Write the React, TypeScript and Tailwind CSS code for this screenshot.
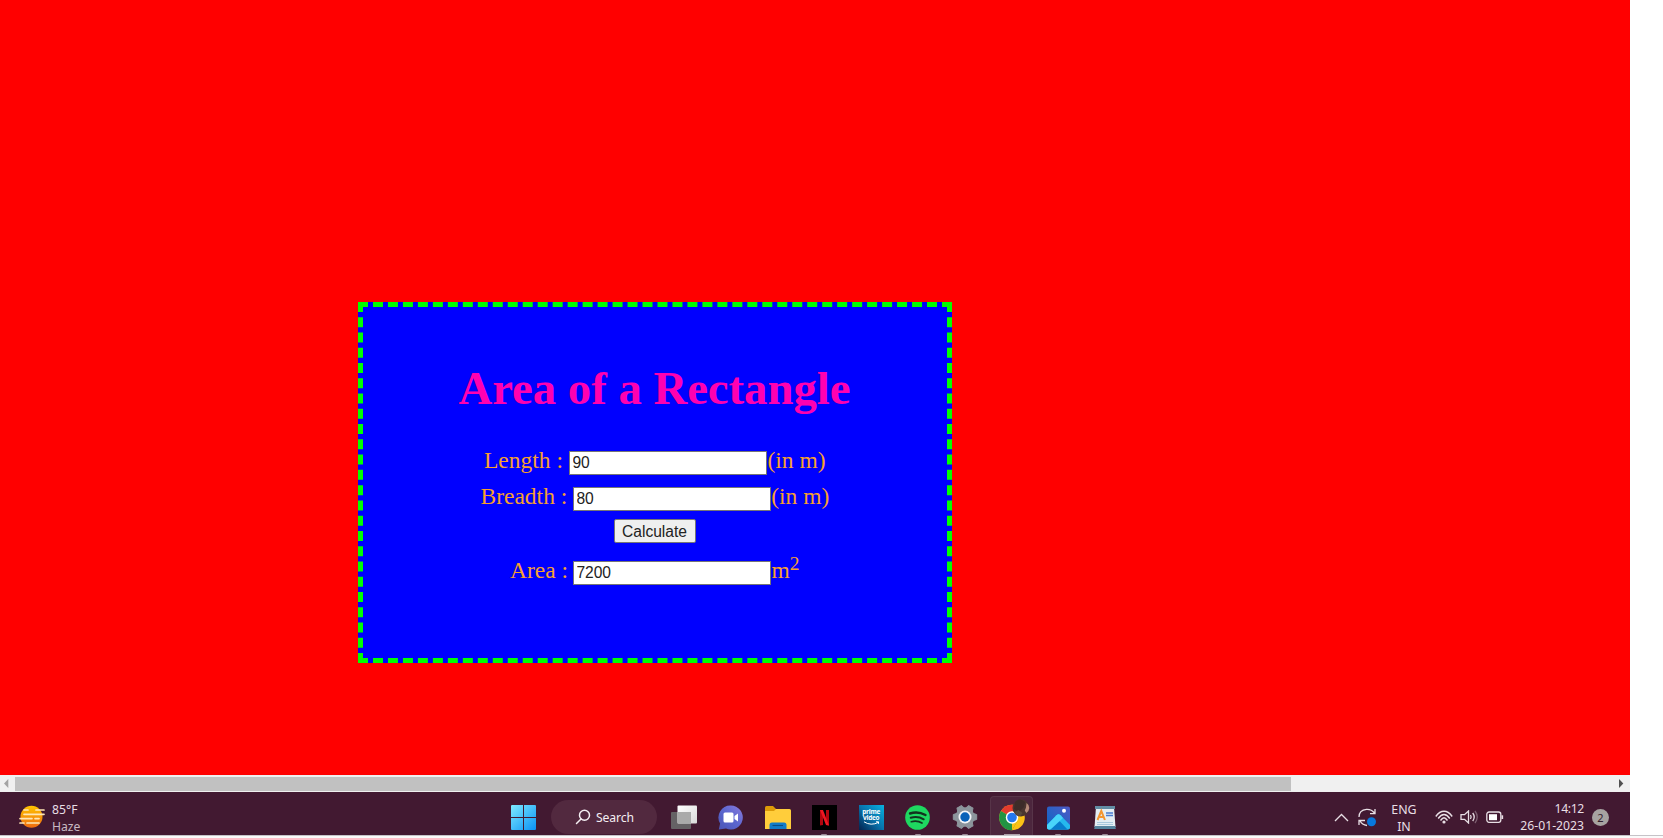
import React from "react";

const serif = "font-['Liberation_Serif',serif]";
const field =
  "h-[23.5px] border border-[#767676] bg-white pl-[3px] font-['Liberation_Sans',sans-serif] text-[15.6px] leading-[21px] tracking-[-0.1px] text-[#222] outline-none rounded-none";

function Slot({ children, dot }: { children: React.ReactNode; dot?: boolean }) {
  return (
    <div className="flex h-[43px] w-[46.8px] flex-col items-center">
      <div className="flex h-[42px] w-full items-end justify-center pb-[4px]">{children}</div>
      <div className={dot ? "h-px w-[6px] rounded-t bg-[#9b8794]" : "h-px"} />
    </div>
  );
}

function Weather() {
  return (
    <svg width="28" height="24" viewBox="0 0 28 24">
      <defs>
        <linearGradient id="sun" x1="0" y1="0" x2="0" y2="1">
          <stop offset="0" stopColor="#ffc400" />
          <stop offset="1" stopColor="#ef6a10" />
        </linearGradient>
      </defs>
      <circle cx="13.5" cy="11.8" r="11" fill="url(#sun)" />
      <g stroke="#ffe6b5" strokeWidth="1.7" strokeLinecap="round">
        <path d="M18 5h8M6 5h4M6 9.3h20M2 13.6h12M17 13.6h4M2 18h4M9 18h12" />
      </g>
    </svg>
  );
}

function Windows() {
  return (
    <svg width="25" height="25" viewBox="0 0 25 25">
      <defs>
        <linearGradient id="win" x1="0" y1="0" x2="1" y2="1">
          <stop offset="0" stopColor="#7eeaff" />
          <stop offset="1" stopColor="#0a91f5" />
        </linearGradient>
      </defs>
      <path fill="url(#win)" d="M1 0h11v12H0V1a1 1 0 0 1 1-1zM13 0h11a1 1 0 0 1 1 1v11H13zM0 13h12v12H1a1 1 0 0 1-1-1zM13 13h12v11a1 1 0 0 1-1 1H13z" />
    </svg>
  );
}

function TaskView() {
  return (
    <svg width="26" height="25" viewBox="0 0 26 25">
      <defs>
        <linearGradient id="tv" x1="0" y1="0" x2="1" y2="1">
          <stop offset="0" stopColor="#fff" />
          <stop offset="1" stopColor="#d9d9d9" />
        </linearGradient>
      </defs>
      <rect x="0" y="7" width="20" height="17" rx="1" fill="#656265" />
      <rect x="6.5" y="0.5" width="19.5" height="18" rx="1" fill="url(#tv)" />
      <path d="M6.500 7H20v11.500H6.500z" fill="#aaa" />
    </svg>
  );
}

function Chat() {
  return (
    <svg width="25" height="25" viewBox="0 0 25 25">
      <defs>
        <linearGradient id="chat" x1="1" y1="0" x2="0" y2="1">
          <stop offset="0" stopColor="#8b7bdd" />
          <stop offset="0.5" stopColor="#5b66cf" />
          <stop offset="1" stopColor="#4a55b5" />
        </linearGradient>
      </defs>
      <path d="M13 .5a12 12 0 1 1-5 23L.8 24.500l1.300-6A12 12 0 0 1 13 .5z" fill="url(#chat)" />
      <rect x="5.500" y="7.500" width="10" height="10" rx="1.500" fill="#fff" />
      <path d="M16.500 11l3.500-2.500v8L16.500 14z" fill="#fff" />
    </svg>
  );
}

function Folder() {
  return (
    <svg width="26" height="24" viewBox="0 0 26 24">
      <path d="M0 1.500Q0 0 1.500 0H8l3 3v6H0z" fill="#dc9a08" />
      <path d="M0 5h9l2-2h13.500Q26 3 26 4.500V23H0z" fill="#ffcd3b" />
      <path d="M4.500 23v-4q0-2.500 2.500-2.500h12q2.500 0 2.500 2.500v4z" fill="#117bc9" />
      <path d="M7.500 19.500h10.500" stroke="#0a4c86" strokeWidth="1.100" />
    </svg>
  );
}

function Netflix() {
  return (
    <svg width="25" height="25" viewBox="0 0 25 25">
      <path d="M0 0h25v25H0z" fill="#000" />
      <path d="M8 5h3v15l-3 .5zM14 5h3v15.500l-3-.5z" fill="#b1060f" />
      <path d="M8 5h3l6 15.500-3-.5z" fill="#f01722" />
    </svg>
  );
}

function Prime() {
  return (
    <div className="flex h-[25px] w-[25px] flex-col items-center bg-linear-to-tr from-[#04234f] via-[#0874ad] to-[#09b3e0] pt-[4px] font-['Open_Sans',sans-serif] text-[6.4px] leading-[6px] font-bold tracking-[-0.2px] text-white">
      <span>prime</span>
      <span>video</span>
      <svg width="17" height="5" viewBox="0 0 17 5">
        <path d="M1 .8q7 4.500 14.500.5M13 .8h2.500v2" fill="none" stroke="#fff" strokeWidth="1" />
      </svg>
    </div>
  );
}

function Spotify() {
  return (
    <svg width="25" height="25" viewBox="0 0 25 25">
      <circle cx="12.500" cy="12.500" r="12.300" fill="#1ed760" />
      <g fill="none" stroke="#12321f" strokeLinecap="round">
        <path d="M5 8.500q8-2.500 15.500 1.500" strokeWidth="2.400" />
        <path d="M5.700 12.800q7-2 13 1.500" strokeWidth="2" />
        <path d="M6.300 16.700q6-1.500 10.700 1.300" strokeWidth="1.700" />
      </g>
    </svg>
  );
}

function Gear() {
  return (
    <svg width="26" height="26" viewBox="0 0 26 26">
      <g fill="#8c959c" stroke="#8c959c" strokeLinejoin="round">
        <circle cx="13" cy="13" r="9.200" />
        {[0, 60, 120, 180, 240, 300].map((a) => (
          <path key={a} d="M10.500 1.300h5l1.500 4.700h-8z" transform={`rotate(${a + 30} 13 13)`} />
        ))}
      </g>
      <circle cx="13" cy="13" r="6.500" fill="#f2f5f8" />
      <circle cx="13" cy="13" r="4.700" fill="#0862b9" />
    </svg>
  );
}

function Chrome() {
  return (
    <svg width="33" height="32" viewBox="0 0 33 32">
      <circle cx="13" cy="18.500" r="12.800" fill="#fbc116" />
      <path d="M13 18.500L1.900 12.100A12.800 12.800 0 0 1 24.100 12.100z" fill="#e33b2e" />
      <path d="M13 18.500L1.900 12.100A12.800 12.800 0 0 0 13 31.300l5.500-9.600z" fill="#229342" />
      <path d="M13 12.500h11.300l.8 2L18.500 22 13 31.300z" fill="#fbc116" />
      <circle cx="13" cy="18.500" r="6.200" fill="#fff" />
      <circle cx="13" cy="18.500" r="4.800" fill="#2478ee" />
      <circle cx="22" cy="9" r="8.500" fill="#49352f" />
      <path d="M27.500 4q3 2 2.800 5t-3 5l-1.500-2.500 1.200-3z" fill="#b58a79" />
      <path d="M16 3q5-5 10 0l-1 5-5 5-5-3z" fill="#3c2c29" />
      <path d="M15.500 13l4-2 4 3-2 3q-4 0-6-4z" fill="#574a3c" />
    </svg>
  );
}

function Photos() {
  return (
    <svg width="23" height="24" viewBox="0 0 23 24">
      <defs>
        <linearGradient id="ph" x1="0" y1="1" x2="1" y2="0">
          <stop offset="0" stopColor="#0868c5" />
          <stop offset="1" stopColor="#5059c5" />
        </linearGradient>
        <clipPath id="phc"><rect width="23" height="23" y=".5" rx="2" /></clipPath>
      </defs>
      <g clipPath="url(#phc)">
        <path d="M0 0h23v24H0z" fill="url(#ph)" />
        <path d="M-1 20L9.500 9.300q2-2 4 0L24 20v5H-1z" fill="#25b8ed" />
        <path d="M2 24l7.500-8q2-2 4 0l7.500 8z" fill="#087ccc" />
        <path d="M9.500 9.300q2-2 4 0l2.500 2.700L3 24h-4v-4z" fill="#48d5fa" />
      </g>
      <circle cx="17" cy="4.700" r="2" fill="#fff" />
    </svg>
  );
}

function WordPad() {
  return (
    <svg width="22" height="25" viewBox="0 0 22 25">
      <path d="M2 2h18l1.500 20H.5z" fill="#e4edf3" />
      <path d="M1 1h20v3H1z" fill="#638da4" />
      <path d="M.7 21h20.600l.5 3H.2z" fill="#56849f" />
      <path d="M3.500 15L7.300 6l3.600 9M5 12h5" fill="none" stroke="#f39531" strokeWidth="2" />
      <path d="M12 8h7M12 10.500h7" stroke="#477bd1" strokeWidth="1.500" />
      <path d="M3 17.500h16M3 19.500h16" stroke="#a8c8dd" strokeWidth="1" />
    </svg>
  );
}

function Tray() {
  return (
    <>
      <svg className="mt-[21px] shrink-0" width="15" height="9" viewBox="0 0 15 9">
        <path d="M1 8l6.500-6.500L14 8" fill="none" stroke="#e8dfe5" strokeWidth="1.300" />
      </svg>
      <svg className="mt-[16px] ml-[9px] shrink-0" width="19" height="20" viewBox="0 0 19 20">
        <g fill="none" stroke="#e8dfe5" strokeWidth="1.300">
          <path d="M1 9Q1 2 8.500 1.300q5-.3 8 3.700M17 1v4.600h-5" />
          <path d="M1 17v-4.500h6M2 12.800q2 4 7 4.700" />
        </g>
        <circle cx="13.500" cy="13.700" r="4.500" fill="#0878dd" />
      </svg>
      <div className="ml-[11px] flex w-[32px] flex-col pt-[9px] text-center text-[12.4px] leading-[17px]">
        <span>ENG</span>
        <span>IN</span>
      </div>
      <svg className="mt-[18px] ml-[15px] shrink-0" width="18" height="15" viewBox="0 0 18 15">
        <g fill="none" stroke="#e8dfe5" strokeWidth="1.400">
          <path d="M.8 6.500Q4.500 1.300 9 1.300T17.200 6.500" />
          <path d="M3.200 8.500Q6 4.500 9 4.500t5.800 4" />
          <path d="M5.500 10.500Q7.500 7.700 9 7.700t3.500 2.800" />
        </g>
        <circle cx="9" cy="12" r="1.600" fill="#e8dfe5" />
      </svg>
      <svg className="mt-[18px] ml-[7px] shrink-0" width="19" height="14" viewBox="0 0 19 14">
        <g fill="none" stroke="#e8dfe5" strokeWidth="1.300">
          <path d="M1 4.700h3.500L8.500 1v12L4.500 9.300H1z" />
          <path d="M10.500 5q1.300 2 0 4M12.700 3q3 4 0 8" />
          <path d="M15 1q4.500 6 0 12" opacity=".35" />
        </g>
      </svg>
      <svg className="mt-[19px] ml-[7px] shrink-0" width="18" height="13" viewBox="0 0 18 13">
        <rect x=".8" y="1" width="14" height="10.300" rx="2.200" fill="none" stroke="#e8dfe5" strokeWidth="1.300" />
        <rect x="3" y="3.200" width="8" height="6" fill="#fff" />
        <path d="M16.300 4.300v3.700" stroke="#e8dfe5" strokeWidth="1.700" />
      </svg>
      <div className="ml-[9px] flex w-[71px] flex-col pt-[8px] text-right text-[12.2px] leading-[17px]">
        <span className="tracking-[-0.35px]">14:12</span>
        <span className="whitespace-nowrap">26-01-2023</span>
      </div>
      <div className="mt-[17px] ml-[8px] flex h-[17px] w-[17px] shrink-0 items-center justify-center rounded-full bg-[#a7a3a1] text-[11px] leading-none text-[#32202c]">
        2
      </div>
    </>
  );
}

export default function App() {
  return (
    <div className="flex h-[838px] w-[1663px] flex-col overflow-hidden bg-white">
      <div className="flex h-[835px] w-[1630px] flex-col">
        <main className="h-[775px] bg-[#ff0000] pt-[302px] pl-[357.5px]">
          <section className={`h-[360.6px] w-[594.5px] border-[5.3px] border-dashed border-[#00ff00] bg-[#0000ff] text-[#f7a02e] ${serif} text-[23.5px] leading-[28px]`}>
            <h1 className="pt-[55px] pl-[96px] text-[46.7px] leading-[53px] font-bold whitespace-nowrap text-[#ff00b0]">
              Area of a Rectangle
            </h1>
            <div className="mt-[31px] flex h-[36px] items-start whitespace-nowrap">
              <label className="w-[206px] pl-[121.500px] whitespace-pre">Length :</label>
              <input className={`${field} mt-[5px] w-[198.500px]`} defaultValue="90" />
              <span className="pl-[0.5px]">(in m)</span>
            </div>
            <div className="flex h-[37px] items-start whitespace-nowrap">
              <label className="w-[210px] pl-[118px] whitespace-pre">Breadth :</label>
              <input className={`${field} mt-[5px] w-[198px]`} defaultValue="80" />
              <span className="pl-[0.7px]">(in m)</span>
            </div>
            <div className="flex h-[37px] pl-[251px]">
              <button className="h-[24px] w-[82px] rounded-[2px] border border-[#767676] bg-[#efefef] font-['Liberation_Sans',sans-serif] text-[15.6px] leading-[21px] text-[#222]">
                Calculate
              </button>
            </div>
            <div className="flex h-[30px] items-start whitespace-nowrap">
              <label className="w-[210px] pl-[147.500px] whitespace-pre">Area :</label>
              <input className={`${field} mt-[5px] w-[198.500px]`} defaultValue="7200" />
              <span className="pl-[0.5px]">m</span>
              <span className="-mt-[6px] text-[19.5px]">2</span>
            </div>
          </section>
        </main>

        <div className="flex h-[17px] items-center bg-[#f0f0f0]">
          <svg className="ml-[4px]" width="11" height="9" viewBox="0 0 11 9">
            <path d="M4.300 0v9L0 4.500z" fill="#a3a3a3" />
          </svg>
          <div className="h-[14px] w-[1276px] bg-[#c1c1c1]" />
          <svg className="ml-[328px]" width="5" height="9" viewBox="0 0 5 9">
            <path d="M0 0v9l4.300-4.500z" fill="#505050" />
          </svg>
        </div>

        <footer className="flex h-[43px] items-start bg-[#421931] font-['Noto_Sans',sans-serif] text-[#e8dfe5]">
          <div className="flex w-[511px] items-start pl-[18px]">
            <div className="pt-[12.500px]"><Weather /></div>
            <div className="flex flex-col pt-[9px] pl-[6px] text-[12.200px] leading-[17px] whitespace-nowrap">
              <span>85°F</span>
              <span className="text-[#c9b9c3]">Haze</span>
            </div>
          </div>
          <div className="pt-[13px]"><Windows /></div>
          <div className="mt-[8px] ml-[15px] flex h-[34px] w-[106px] items-center rounded-full bg-[#52293f] pl-[24px] text-[12.200px]">
            <svg width="16" height="16" viewBox="0 0 16 16">
              <circle cx="9.500" cy="6.300" r="5" fill="none" stroke="#f4eef2" strokeWidth="1.500" />
              <path d="M6 10l-4.500 4.500" stroke="#f4eef2" strokeWidth="1.500" strokeLinecap="round" />
            </svg>
            <span className="pt-[3px] pl-[5px] tracking-[-0.1px] text-[#f4eef2]">Search</span>
          </div>
          <div className="ml-[3.600px] flex w-[672.400px]">
            <Slot><TaskView /></Slot>
            <Slot><Chat /></Slot>
            <Slot><Folder /></Slot>
            <Slot dot><Netflix /></Slot>
            <Slot><Prime /></Slot>
            <Slot dot><Spotify /></Slot>
            <Slot dot><Gear /></Slot>
            <div className="mt-[4px] ml-[2px] flex h-[39px] w-[43px] flex-col items-center rounded-t-[4px] border border-b-0 border-[#573448] bg-[#4c263d]">
              <div className="flex h-[37px] w-full items-end pb-[3px] pl-[7.500px]"><Chrome /></div>
              <div className="h-px w-[16px] bg-[#b0a0aa]" />
            </div>
            <div className="w-[1.800px]" />
            <Slot dot><Photos /></Slot>
            <Slot dot><WordPad /></Slot>
          </div>
          <div className="flex h-[43px] flex-1 pl-px"><Tray /></div>
        </footer>
      </div>
      <div className="h-px bg-[#c6c3c8]" />
      <div className="h-[2px] bg-[#fafafa]" />
    </div>
  );
}
